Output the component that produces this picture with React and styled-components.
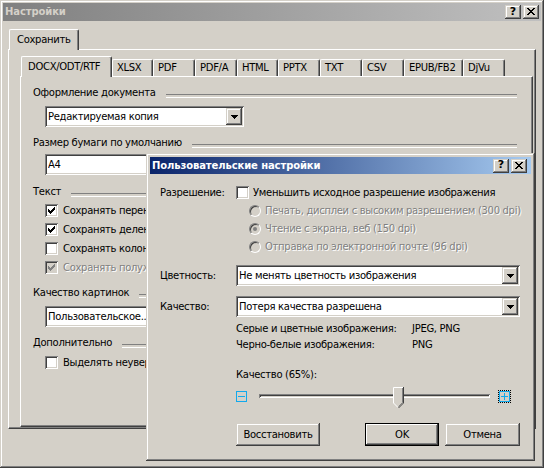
import React from 'react';
import styled, { createGlobalStyle, css } from 'styled-components';

const FACE = '#d4d0c8';
const SHADOW = '#808080';
const DARK = '#404040';

const raised = css`
  box-shadow: inset -1px -1px ${DARK}, inset 1px 1px ${FACE}, inset -2px -2px ${SHADOW}, inset 2px 2px #fff;
`;

const sunken = css`
  box-shadow: inset 1px 1px ${SHADOW}, inset -1px -1px #fff, inset 2px 2px ${DARK}, inset -2px -2px ${FACE};
`;

const GlobalStyle = createGlobalStyle`
  html, body {
    margin: 0;
    padding: 0;
    background: ${FACE};
  }
  body {
    font-family: "DejaVu Sans", Verdana, sans-serif;
    font-size: 10px;
    line-height: 12px;
    letter-spacing: -0.3px;
    color: #000;
  }
  * {
    box-sizing: border-box;
  }
`;

const Window = styled.div`
  position: relative;
  width: 544px;
  height: 468px;
  padding: 3px;
  background: ${FACE};
  ${raised}
  display: flex;
  flex-direction: column;
  overflow: hidden;
`;

const TitleBar = styled.div`
  flex: none;
  height: ${p => p.$h}px;
  display: flex;
  align-items: center;
  justify-content: space-between;
  padding: 0 ${p => p.$pr}px 0 2px;
  background: ${p => (p.$active
    ? 'linear-gradient(to right, #0a246a, #a6caf0)'
    : 'linear-gradient(to right, #808080, #c0c0c0)')};
  color: ${p => (p.$active ? '#fff' : FACE)};
  font-weight: bold;
  letter-spacing: -0.1px;
  white-space: nowrap;
`;

const CaptionButtons = styled.div`
  display: flex;
  gap: 2px;
`;

const CaptionButton = styled.div`
  width: 16px;
  height: 14px;
  background: ${FACE};
  ${raised}
  display: flex;
  align-items: center;
  justify-content: center;
  color: #000;
  font-weight: bold;
  font-size: 11px;
  padding-bottom: 1px;
`;

const Body = styled.div`
  padding: 8px 5px 0 5px;
`;

const TabStrip = styled.div`
  display: flex;
  align-items: flex-end;
  margin-left: 1px;
  height: 20px;
`;

const Tab = styled.div`
  position: relative;
  z-index: ${p => (p.$active ? 2 : 1)};
  flex: none;
  width: ${p => p.$w}px;
  height: ${p => (p.$active ? 21 : 17)}px;
  margin-bottom: ${p => (p.$active ? -1 : 0)}px;
  padding: ${p => (p.$active ? '4px 0 0 6px' : '2px 0 0 4px')};
  background: ${FACE};
  border-left: 1px solid #fff;
  border-top: 1px solid #fff;
  border-right: 1px solid ${DARK};
  border-radius: 2px 2px 0 0;
  box-shadow: inset -1px 0 ${SHADOW};
  white-space: nowrap;
  overflow: hidden;
`;

const Panel = styled.div`
  width: ${p => p.$w}px;
  height: ${p => p.$h}px;
  padding: ${p => p.$pad};
  border: 1px solid;
  border-color: #fff ${DARK} ${DARK} #fff;
  box-shadow: inset -1px -1px ${SHADOW};
  overflow: hidden;
`;

const PanelContent = styled.div`
  display: flex;
  flex-direction: column;
  padding-left: 12px;
`;

const GroupHeader = styled.div`
  display: flex;
  align-items: center;
  gap: 10px;
  height: 14px;
  margin-top: ${p => p.$mt}px;
  margin-right: 15px;
  white-space: nowrap;

  &::after {
    content: '';
    flex: 1;
    height: 2px;
    margin-top: 5px;
    border-top: 1px solid ${SHADOW};
    border-bottom: 1px solid #fff;
  }
`;

const Indented = styled.div`
  margin-left: 12px;
  margin-top: ${p => p.$mt || 0}px;
`;

const Field = styled.div`
  position: relative;
  flex: none;
  width: ${p => p.$w}px;
  height: 21px;
  padding: 2px 2px 2px 3px;
  background: #fff;
  ${sunken}
  display: flex;
  align-items: center;
  white-space: nowrap;
  overflow: hidden;
`;

const FieldText = styled.span`
  flex: 1;
  overflow: hidden;
`;

const DropButton = styled.span`
  flex: none;
  width: 16px;
  height: 17px;
  background: ${FACE};
  ${raised}
  display: flex;
  align-items: center;
  justify-content: center;
`;

const CheckRow = styled.div`
  display: flex;
  align-items: center;
  gap: ${p => p.$gap}px;
  height: ${p => p.$h}px;
  margin-top: ${p => p.$mt || 0}px;
  white-space: nowrap;
  color: ${p => (p.$disabled ? SHADOW : '#000')};
  text-shadow: ${p => (p.$disabled ? '1px 1px #fff' : 'none')};
`;

const Box = styled.span`
  flex: none;
  width: 13px;
  height: 13px;
  background: ${p => (p.$disabled ? FACE : '#fff')};
  ${sunken}
  display: flex;
  align-items: center;
  justify-content: center;
`;

const Radio = styled.span`
  position: relative;
  flex: none;
  width: 12px;
  height: 12px;
  border-radius: 50%;
  border: 1px solid;
  border-color: ${SHADOW} #fff #fff ${SHADOW};
  background: ${FACE};
  box-shadow: inset 1px 1px ${DARK}, inset -1px -1px ${FACE};

  &::after {
    content: '';
    display: ${p => (p.$checked ? 'block' : 'none')};
    position: absolute;
    left: 3px;
    top: 3px;
    width: 4px;
    height: 4px;
    border-radius: 50%;
    background: ${SHADOW};
  }
`;

const Dialog = styled.div`
  position: absolute;
  left: 146px;
  top: 153px;
  width: 389px;
  height: 308px;
  padding: 4px;
  background: ${FACE};
  ${raised}
  display: flex;
  flex-direction: column;
`;

const DialogBody = styled.div`
  display: flex;
  flex-direction: column;
  padding: 0 11px 0 10px;
`;

const Row = styled.div`
  display: flex;
  align-items: center;
  height: ${p => p.$h}px;
  margin-top: ${p => p.$mt || 0}px;
  padding-left: ${p => p.$indent || 0}px;
  white-space: nowrap;
`;

const RadioGroup = styled.div`
  display: flex;
  flex-direction: column;
  padding-left: 89px;
`;

const Label = styled.div`
  flex: none;
  width: ${p => p.$w}px;
`;

const Track = styled.div`
  position: relative;
  flex: none;
  width: 231px;
  height: 4px;
  margin: 0 9px 0 12px;
  background: ${FACE};
  ${sunken}
`;

const Thumb = styled.svg`
  position: absolute;
  top: -7px;
  display: block;
`;

const StepIcon = styled.svg`
  flex: none;
  display: block;
  outline: ${p => (p.$focus ? '1px dotted #000' : 'none')};
`;

const ButtonRow = styled.div`
  display: flex;
  align-items: center;
  justify-content: space-between;
  margin: ${p => p.$mt}px 0 0 76px;
`;

const ButtonGroup = styled.div`
  display: flex;
  gap: 6px;
`;

const Button = styled.div`
  width: ${p => p.$w}px;
  height: 23px;
  background: ${FACE};
  display: flex;
  align-items: center;
  justify-content: center;
  ${p => (p.$default
    ? css`
        box-shadow: inset 0 0 0 1px #000, inset -2px -2px ${DARK}, inset 2px 2px #fff, inset -3px -3px ${SHADOW};
      `
    : raised)}
`;

const Arrow = () => (
  <svg width="7" height="4" viewBox="0 0 7 4" shapeRendering="crispEdges">
    <path d="M0 0h7v1h-1v1h-1v1h-1v1h-1v-1h-1v-1h-1v-1h-1z" fill="#000" />
  </svg>
);

const Check = ({ color = '#000' }) => (
  <svg width="7" height="7" viewBox="0 0 7 7" shapeRendering="crispEdges">
    <path d="M0 2h1v1h1v1h1v-1h1v-1h1v-1h1v-1h1v3h-1v1h-1v1h-1v1h-1v1h-1v-1h-1v-1h-1v-1h-1z" fill={color} />
  </svg>
);

const CloseGlyph = () => (
  <svg width="8" height="7" viewBox="0 0 8 7" shapeRendering="crispEdges">
    <path d="M0 0h2v1h1v1h2v-1h1v-1h2v1h-1v1h-1v1h-1v1h1v1h1v1h1v1h-2v-1h-1v-1h-2v1h-1v1h-2v-1h1v-1h1v-1h1v-1h-1v-1h-1v-1h-1z" fill="#000" />
  </svg>
);

const Select = ({ w, children }) => (
  <Field $w={w}>
    <FieldText>{children}</FieldText>
    <DropButton><Arrow /></DropButton>
  </Field>
);

const CheckItem = ({ checked, disabled, gap = 5, h = 19, mt, children }) => (
  <CheckRow $gap={gap} $h={h} $mt={mt} $disabled={disabled}>
    <Box $disabled={disabled}>{checked && <Check color={disabled ? SHADOW : '#000'} />}</Box>
    <span>{children}</span>
  </CheckRow>
);

const RadioItem = ({ checked, children }) => (
  <CheckRow $gap={4} $h={18} $disabled>
    <Radio $checked={checked} />
    <span>{children}</span>
  </CheckRow>
);

const formats = [
  ['DOCX/ODT/RTF', 91],
  ['XLSX', 41],
  ['PDF', 42],
  ['PDF/A', 42],
  ['HTML', 41],
  ['PPTX', 42],
  ['TXT', 42],
  ['CSV', 42],
  ['EPUB/FB2', 59],
  ['DjVu', 42],
];

function Caption({ title, active, h, pr }) {
  return (
    <TitleBar $active={active} $h={h} $pr={pr}>
      <span>{title}</span>
      <CaptionButtons>
        <CaptionButton>?</CaptionButton>
        <CaptionButton><CloseGlyph /></CaptionButton>
      </CaptionButtons>
    </TitleBar>
  );
}

function CustomSettings() {
  const quality = 65;
  const thumbLeft = Math.round((231 - 11) * (quality - 4) / 100);

  return (
    <Dialog>
      <Caption title="Пользовательские настройки" active h={17} pr={4} />
      <DialogBody>
        <Row $h={19} $mt={9}>
          <Label $w={76}>Разрешение:</Label>
          <CheckItem gap={4}>Уменьшить исходное разрешение изображения</CheckItem>
        </Row>
        <RadioGroup>
          <RadioItem>Печать, дисплеи с высоким разрешением (300 dpi)</RadioItem>
          <RadioItem checked>Чтение с экрана, веб (150 dpi)</RadioItem>
          <RadioItem>Отправка по электронной почте (96 dpi)</RadioItem>
        </RadioGroup>
        <Row $h={21} $mt={9}>
          <Label $w={76}>Цветность:</Label>
          <Select w={284}>Не менять цветность изображения</Select>
        </Row>
        <Row $h={21} $mt={10}>
          <Label $w={76}>Качество:</Label>
          <Select w={284}>Потеря качества разрешена</Select>
        </Row>
        <Row $h={16} $mt={4} $indent={76}>
          <Label $w={176}>Серые и цветные изображения:</Label>
          <span>JPEG, PNG</span>
        </Row>
        <Row $h={16} $indent={76}>
          <Label $w={176}>Черно-белые изображения:</Label>
          <span>PNG</span>
        </Row>
        <Row $h={16} $mt={14} $indent={76}>
          Качество ({quality}%):
        </Row>
        <Row $h={20} $mt={3} $indent={76}>
          <StepIcon width="11" height="11" viewBox="0 0 11 11" shapeRendering="crispEdges">
            <rect x="0.5" y="0.5" width="10" height="10" fill="none" stroke="#12a9ec" />
            <rect x="2" y="5" width="7" height="1" fill="#12a9ec" />
          </StepIcon>
          <Track>
            <Thumb width="11" height="21" viewBox="0 0 11 21" style={{ left: thumbLeft }}>
              <path d="M0 0H11V16L5.5 21.5L0 16Z" fill={FACE} />
              <path d="M0.5 16V0.5H10" fill="none" stroke="#fff" />
              <path d="M0.5 16L5 20.5" fill="none" stroke="#fff" />
              <path d="M10.5 0V16L5.5 21" fill="none" stroke={DARK} />
              <path d="M9.5 1V15.6L5.5 19.6" fill="none" stroke={SHADOW} />
            </Thumb>
          </Track>
          <StepIcon $focus width="11" height="11" viewBox="0 0 11 11" shapeRendering="crispEdges">
            <rect x="0.5" y="0.5" width="10" height="10" fill="none" stroke="#12a9ec" />
            <rect x="2" y="5" width="7" height="1" fill="#12a9ec" />
            <rect x="5" y="2" width="1" height="7" fill="#12a9ec" />
          </StepIcon>
        </Row>
        <ButtonRow $mt={17}>
          <Button $w={84}>Восстановить</Button>
          <ButtonGroup>
            <Button $w={74} $default>OK</Button>
            <Button $w={75}>Отмена</Button>
          </ButtonGroup>
        </ButtonRow>
      </DialogBody>
    </Dialog>
  );
}

export default function App() {
  return (
    <>
      <GlobalStyle />
      <Window>
        <Caption title="Настройки" h={18} pr={2} />
        <Body>
          <TabStrip>
            <Tab $active $w={70} style={{ paddingLeft: 7 }}>Сохранить</Tab>
          </TabStrip>
          <Panel $w={528} $h={380} $pad="6px 0 0 11px">
            <TabStrip>
              {formats.map(([name, w], i) => (
                <Tab key={name} $w={w} $active={i === 0}>{name}</Tab>
              ))}
            </TabStrip>
            <Panel $w={513} $h={351} $pad="0">
              <PanelContent>
                <GroupHeader $mt={9}>Оформление документа</GroupHeader>
                <Indented $mt={6}>
                  <Select w={199}>Редактируемая копия</Select>
                </Indented>
                <GroupHeader $mt={9}>Размер бумаги по умолчанию</GroupHeader>
                <Indented $mt={4}>
                  <Field $w={199}><FieldText>A4</FieldText></Field>
                </Indented>
                <GroupHeader $mt={10}>Текст</GroupHeader>
                <Indented $mt={2}>
                  <CheckItem checked>Сохранять переносы строк</CheckItem>
                  <CheckItem checked>Сохранять деление на страницы</CheckItem>
                  <CheckItem>Сохранять колонтитулы</CheckItem>
                  <CheckItem checked disabled>Сохранять полужирное начертание</CheckItem>
                </Indented>
                <GroupHeader $mt={9}>Качество картинок</GroupHeader>
                <Indented $mt={6}>
                  <Select w={199}>Пользовательское...</Select>
                </Indented>
                <GroupHeader $mt={9}>Дополнительно</GroupHeader>
                <Indented $mt={3}>
                  <CheckItem>Выделять неуверенно распознанные символы</CheckItem>
                </Indented>
              </PanelContent>
            </Panel>
          </Panel>
        </Body>
        <CustomSettings />
      </Window>
    </>
  );
}
